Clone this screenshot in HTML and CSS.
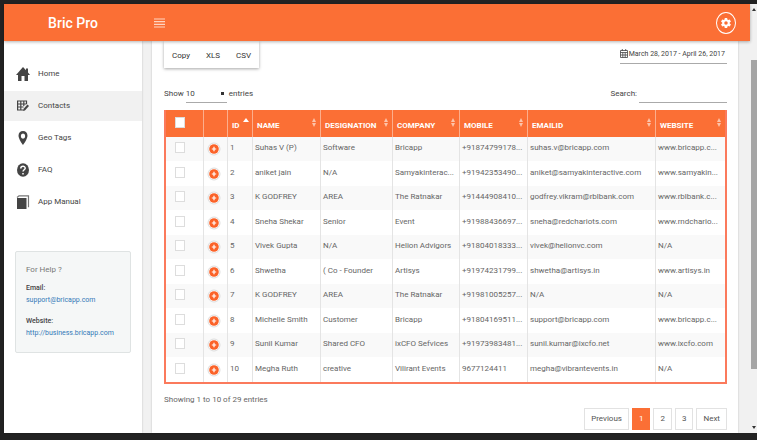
FILE: index.html
```html
<!DOCTYPE html>
<html lang="en">
<head>
    <meta charset="UTF-8">
    <meta name="viewport" content="width=device-width, initial-scale=1.0">
    <title>Bric Pro</title>
    <link rel="stylesheet" href="styles.css">
</head>
<body>
    <div class="window">
        <div class="app">
            <header class="topbar">
                <a class="brand" href="#">Bric Pro</a>
                <button class="menu-toggle" type="button" aria-label="Menu">
                    <svg width="11" height="10" viewBox="0 0 11 10"><path d="M0 1h11M0 3.7h11M0 6.3h11M0 9h11" stroke="#ffd5c2" stroke-width="1.2"/></svg>
                </button>
                <button class="settings" type="button" aria-label="Settings">
                    <svg width="10" height="10" viewBox="2 2 20 20"><path fill="#fff" d="M19.4 13c.1-.3.1-.7.1-1s0-.7-.1-1l2.1-1.6c.2-.2.3-.4.1-.7l-2-3.4c-.1-.2-.4-.3-.6-.2l-2.5 1c-.5-.4-1.1-.7-1.7-1l-.4-2.6c0-.3-.2-.5-.5-.5h-4c-.2 0-.5.2-.5.4l-.3 2.7c-.6.2-1.2.6-1.7 1l-2.5-1c-.2-.1-.5 0-.6.2l-2 3.4c-.1.2-.1.5.1.7L4.5 11c0 .3-.1.7-.1 1s0 .7.1 1l-2.1 1.6c-.2.2-.3.4-.1.7l2 3.4c.1.2.4.3.6.2l2.5-1c.5.4 1.1.7 1.7 1l.3 2.6c0 .3.3.5.5.5h4c.3 0 .5-.2.5-.4l.4-2.7c.6-.2 1.2-.6 1.7-1l2.5 1c.2.1.5 0 .6-.2l2-3.4c.1-.2.1-.5-.1-.7zM12 15.5a3.5 3.5 0 1 1 0-7 3.5 3.5 0 0 1 0 7z"/></svg>
                </button>
            </header>

            <div class="layout">
                <aside class="sidebar">
                    <nav class="nav">
                        <a class="nav-item" href="#">
                            <svg width="14" height="16" viewBox="0 0 14 16"><path d="M7 1 0 9h2v6h3.500v-5h3v5H12V9h2l-2-2.400V2.500h-2v1.800z"/></svg>
                            Home
                        </a>
                        <a class="nav-item active" href="#">
                            <svg width="14" height="14" viewBox="0 0 14 14"><path d="M7 11H1.600V2h8.900v3M1.600 5h8.900M1.600 8h6M4.800 2v9M7.800 2v5" fill="none" stroke="#444" stroke-width="1.200"/><path d="m7 12 .4-2L11.500 5.600 13 7.100 8.900 11.500z"/></svg>
                            Contacts
                        </a>
                        <a class="nav-item" href="#">
                            <svg width="14" height="16" viewBox="0 0 14 16"><path fill-rule="evenodd" d="M7 1C4.300 1 2.500 3 2.500 5.700 2.500 9 7 15 7 15s4.500-6 4.500-9.300C11.500 3 9.700 1 7 1zm0 2.500a2.200 2.600 0 1 1 0 5.200 2.200 2.600 0 0 1 0-5.200z"/></svg>
                            Geo Tags
                        </a>
                        <a class="nav-item" href="#">
                            <svg width="14" height="14" viewBox="0 0 14 14"><ellipse cx="7" cy="7" rx="6" ry="6.700"/><path d="M4.800 5.500c0-3 4.400-2.800 4.400-.3C9.200 6.700 7 6.900 7 8.600M7 9.900v1.600" fill="none" stroke="#fff" stroke-width="1.500"/></svg>
                            FAQ
                        </a>
                        <a class="nav-item" href="#">
                            <svg width="14" height="15" viewBox="0 0 14 15"><path d="M1 3h9.500v11H1z"/><path d="M1 2.500 3 .8h9.500v11.500" fill="none" stroke="#777" stroke-width="1.200"/></svg>
                            App Manual
                        </a>
                    </nav>
                    <section class="help">
                        <h2>For Help ?</h2>
                        <strong>Email:</strong>
                        <a href="mailto:support@bricapp.com">support@bricapp.com</a>
                        <strong class="help-site">Website:</strong>
                        <a href="http://business.bricapp.com">http://business.bricapp.com</a>
                    </section>
                </aside>

                <main class="card">
                    <div class="row">
                        <div class="export">
                            <button type="button">Copy</button>
                            <button type="button">XLS</button>
                            <button type="button">CSV</button>
                        </div>
                        <button class="daterange" type="button">
                            <svg width="8" height="9" viewBox="0 0 8 9"><path d="M.5 1.500h7v7h-7zM.5 3.500h7M.5 6h7M2.800 3.500v5M5.200 3.500v5M2.300 0v2M5.700 0v2" fill="none" stroke="#444" stroke-width=".8"/></svg>
                            March 28, 2017 - April 26, 2017
                        </button>
                    </div>

                    <div class="row filters">
                        <label>Show
                            <select>
                                <option>10</option>
                                <option>25</option>
                                <option>50</option>
                            </select>
                            entries
                        </label>
                        <label>Search: <input class="search" type="search"></label>
                    </div>

                    <table class="contacts">
                        <thead>
                            <tr>
                                <th class="col-check"><input type="checkbox" aria-label="Select all"></th>
                                <th class="col-more"></th>
                                <th class="col-id sorted">ID</th>
                                <th class="col-name sort">NAME</th>
                                <th class="col-designation sort">DESIGNATION</th>
                                <th class="col-company sort">COMPANY</th>
                                <th class="col-mobile sort">MOBILE</th>
                                <th class="sort">EMAILID</th>
                                <th class="col-website sort">WEBSITE</th>
                            </tr>
                        </thead>
                        <tbody id="contact-rows"></tbody>
                    </table>

                    <div class="row footer">
                        <p>Showing 1 to 10 of 29 entries</p>
                        <nav class="pages">
                            <a href="#">Previous</a>
                            <a class="current" href="#">1</a>
                            <a href="#">2</a>
                            <a href="#">3</a>
                            <a href="#">Next</a>
                        </nav>
                    </div>
                </main>
            </div>
        </div>
        <div class="scrollbar">
            <span class="arrow-up"></span>
            <span class="thumb"></span>
            <span class="arrow-down"></span>
        </div>
    </div>

    <script>
        const contacts = [
            ['Suhas V (P)', 'Software', 'Bricapp', '+91874799178...', 'suhas.v@bricapp.com', 'www.bricapp.c...'],
            ['aniket jain', 'N/A', 'Samyakinterac...', '+91942353490...', 'aniket@samyakinteractive.com', 'www.samyakin...'],
            ['K GODFREY', 'AREA', 'The Ratnakar', '+91444908410...', 'godfrey.vikram@rblbank.com', 'www.rblbank.c...'],
            ['Sneha Shekar', 'Senior', 'Event', '+91988436697...', 'sneha@redchariots.com', 'www.rndchario...'],
            ['Vivek Gupta', 'N/A', 'Helion Advigors', '+91804018333...', 'vivek@helionvc.com', 'N/A'],
            ['Shwetha', '( Co - Founder', 'Artisys', '+91974231799...', 'shwetha@artisys.in', 'www.artisys.in'],
            ['K GODFREY', 'AREA', 'The Ratnakar', '+91981005257...', 'N/A', 'N/A'],
            ['Michelle Smith', 'Customer', 'Bricapp', '+91804169511...', 'support@bricapp.com', 'www.bricapp.c...'],
            ['Sunil Kumar', 'Shared CFO', 'ixCFO Sefvices', '+91973983481...', 'sunil.kumar@ixcfo.net', 'www.ixcfo.com'],
            ['Megha Ruth', 'creative', 'Vilirant Events', '9677124411', 'megha@vibrantevents.in', 'N/A']
        ];

        const plus = '<svg width="14" height="14" viewBox="0 0 14 14"><circle cx="7" cy="7" r="6" fill="#fff" stroke="#ddd"/><circle cx="7" cy="7" r="4.800" fill="#fb6228"/><path d="M7 4.800v4.400M4.800 7h4.400" stroke="#fff" stroke-width="1.200"/></svg>';

        document.getElementById('contact-rows').innerHTML = contacts.map((contact, i) => `
            <tr>
                <td class="col-check"><input type="checkbox" aria-label="Select ${contact[0]}"></td>
                <td class="col-more"><button type="button" aria-label="Details">${plus}</button></td>
                <td>${i + 1}</td>
                ${contact.map(value => `<td>${value}</td>`).join('')}
            </tr>`).join('');
    </script>
</body>
</html>
```

FILE: styles.css
```css
* {
    box-sizing: border-box;
}
body {
    margin: 0;
    background-color: #222;
    font-family: Roboto, "Liberation Sans", sans-serif;
    font-size: 8px;
    line-height: 12px;
    color: #666;
}
a {
    text-decoration: none;
}
button, select, input {
    font: inherit;
    color: inherit;
    background: none;
    border: none;
    border-radius: 0;
    padding: 0;
    margin: 0;
}
button {
    cursor: pointer;
}
svg {
    display: block;
    flex-shrink: 0;
}
.window {
    display: flex;
    min-height: 100vh;
    border: solid #222;
    border-width: 4px 0 8px 4px;
}
.app {
    flex: 1;
    min-width: 0;
    display: flex;
    flex-direction: column;
    background-color: #f1f1f1;
}

/* top bar */
.topbar {
    position: relative;
    display: flex;
    align-items: center;
    height: 37px;
    padding-right: 14px;
    background-color: #fb6f35;
    box-shadow: 0 1px 3px rgba(0, 0, 0, 0.3);
}
.brand {
    width: 138px;
    text-align: center;
    font-size: 14px;
    line-height: 16px;
    font-weight: 500;
    color: #fff;
}
.menu-toggle {
    margin-left: 12px;
}
.settings {
    display: flex;
    align-items: center;
    justify-content: center;
    width: 20px;
    height: 22px;
    margin-left: auto;
    border: 1px solid #fff;
    border-radius: 50%;
}

.layout {
    flex: 1;
    display: flex;
    gap: 10px;
    padding-right: 12px;
}

/* sidebar */
.sidebar {
    width: 138px;
    padding-top: 18px;
    background-color: #fff;
    box-shadow: 0 0 2px rgba(0, 0, 0, 0.2);
}
.nav {
    display: flex;
    flex-direction: column;
    gap: 2px;
}
.nav-item {
    display: flex;
    align-items: center;
    gap: 8px;
    height: 30px;
    padding-left: 12px;
    color: #444;
}
.nav-item svg {
    fill: #444;
}
.nav-item.active {
    background-color: #f1f1f1;
}
.help {
    display: flex;
    flex-direction: column;
    margin: 34px 11px 0;
    padding: 12px 10px 13px;
    font-size: 7px;
    background-color: #f5f7f7;
    border: 1px solid #dfe3e3;
    border-radius: 2px;
}
.help h2 {
    margin: 0 0 6px;
    font-size: 8px;
    font-weight: 400;
    color: #777;
}
.help strong {
    font-weight: 500;
    color: #444;
}
.help a {
    color: #337ab7;
}
.help-site {
    margin-top: 9px;
}

/* main card */
.card {
    flex: 1;
    min-width: 0;
    padding: 0 11px 3px 12px;
    background-color: #fff;
    box-shadow: 0 0 2px rgba(0, 0, 0, 0.2);
}
.row {
    display: flex;
    justify-content: space-between;
    align-items: flex-start;
}
.export {
    display: flex;
    gap: 16px;
    padding: 9px 8px 6px;
    color: #333;
    box-shadow: 0 1px 3px rgba(0, 0, 0, 0.35);
}
.daterange {
    display: flex;
    align-items: center;
    gap: 1px;
    height: 23px;
    padding: 3px 2px 0 0;
    font-size: 7px;
    color: #444;
    border-bottom: 1px solid #aaa;
}
.filters {
    margin-top: 17px;
}
.filters label {
    display: flex;
    align-items: center;
    gap: 2px;
    height: 18px;
    color: #444;
}
.filters select {
    width: 41px;
    height: 18px;
    appearance: none;
    border-bottom: 1px solid #aaa;
    background: linear-gradient(#333, #333) no-repeat right 3px center / 3px 3px;
}
.filters .search {
    width: 88px;
    height: 18px;
    border-bottom: 1px solid #aaa;
}

/* contacts table */
.contacts {
    width: 100%;
    margin-top: 7px;
    table-layout: fixed;
    border-collapse: separate;
    border-spacing: 0;
    border: solid #fb7a5c;
    border-width: 0 2px 2px;
}
.contacts th, .contacts td {
    padding: 0 0 2px 2px;
    border-right: 1px solid #e4e4e4;
    white-space: nowrap;
    text-align: left;
    vertical-align: middle;
}
.contacts th:last-child, .contacts td:last-child {
    border-right: none;
}
.contacts th {
    position: relative;
    height: 27px;
    padding: 4px 0 0 4px;
    background-color: #fb6f35;
    border-right-color: #fcae8c;
    font-weight: 700;
    color: #fff;
}
.contacts td {
    height: 24px;
}
.contacts tr:nth-child(even) td {
    height: 25px;
}
.contacts tbody tr:nth-child(odd) {
    background-color: #f9f9f9;
}
.contacts .col-check {
    width: 38px;
    padding: 0 9px 3px 0;
}
.col-check input {
    appearance: none;
    display: block;
    width: 10px;
    height: 11px;
    margin: 0 auto;
    background-color: #fff;
    border: 1px solid #ddd;
}
.contacts .col-more {
    width: 24px;
    padding: 0 3px 0 0;
}
.col-more button {
    display: block;
    margin: 0 auto;
}
.col-id {
    width: 25px;
}
.col-name {
    width: 68px;
}
.col-designation {
    width: 72px;
}
.col-company {
    width: 67px;
}
.col-mobile {
    width: 68px;
}
.col-website {
    width: 69px;
}
.sort::before, .sort::after, .sorted::before {
    content: "";
    position: absolute;
    right: 4px;
    top: 8px;
    border: solid transparent;
    border-width: 0 2px 4px;
    border-bottom-color: #fdc3a9;
}
.sort::after {
    top: 13px;
    border-width: 4px 2px 0;
    border-top-color: #fdc3a9;
}
.sorted::before {
    right: 3px;
    border-width: 0 3px 4px;
    border-bottom-color: #fff;
}

.footer {
    margin-top: 10px;
}
.footer p {
    margin: 0;
}
.pages {
    display: flex;
    gap: 3px;
    margin-top: 14px;
}
.pages a {
    padding: 4px 6px;
    border: 1px solid #e2e2e2;
    color: #555;
}
.pages .current {
    background-color: #fb6f35;
    border-color: #fb6f35;
    color: #fff;
}

/* scrollbar */
.scrollbar {
    display: flex;
    flex-direction: column;
    align-items: flex-end;
    width: 7px;
    padding: 4px 0;
    background-color: #f1f1f1;
}
.thumb {
    width: 6px;
    flex: 1;
    margin-top: 49px;
    background-color: #a5a5a5;
}
.arrow-up, .arrow-down {
    margin-right: 1px;
    border: solid transparent;
    border-width: 0 2px 3px;
    border-bottom-color: #333;
}
.arrow-down {
    margin-top: 57px;
    border-width: 3px 2px 0;
    border-top-color: #333;
}
```
